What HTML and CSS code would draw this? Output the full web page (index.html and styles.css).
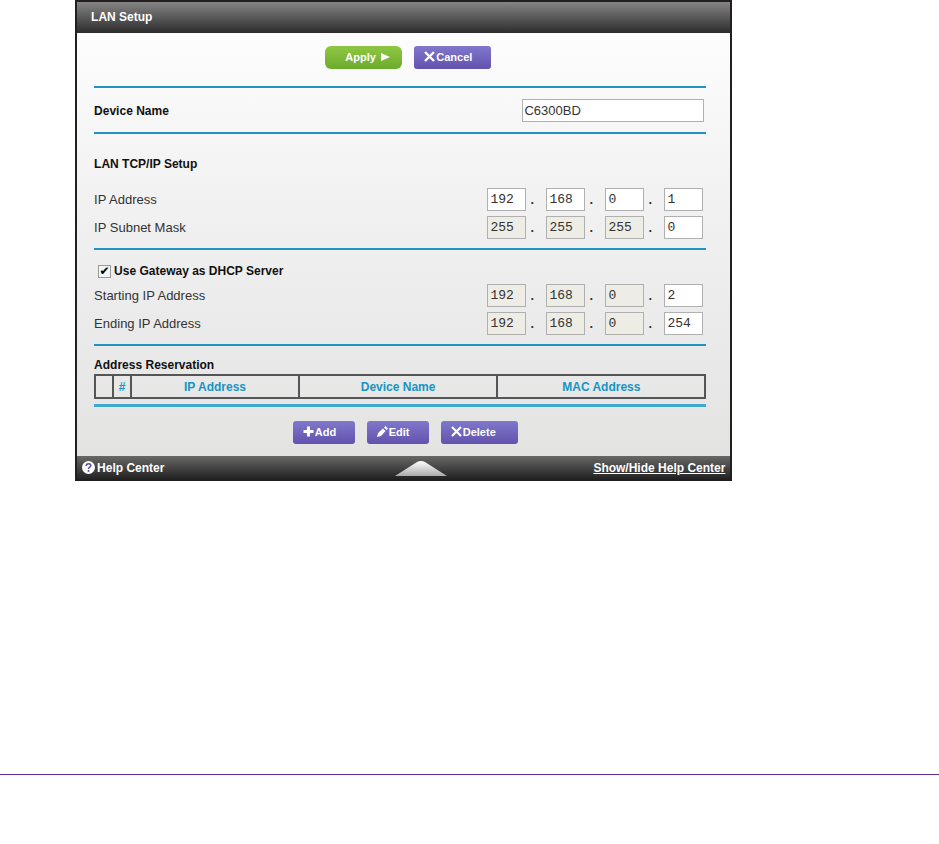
FILE: index.html
```
<!DOCTYPE html>
<html lang="en">
<head>
  <meta charset="UTF-8">
  <title>LAN Setup</title>
  <link rel="stylesheet" href="styles.css">
</head>
<body>
  <form class="panel">
    <h1 class="title">LAN Setup</h1>

    <div class="content">
      <div class="buttons top">
        <button type="submit" class="btn apply">Apply
          <svg width="9" height="8" viewBox="0 0 9 8"><path d="M0 0L9 4L0 8Z" fill="#fff"/></svg>
        </button>
        <button type="button" class="btn cancel">
          <svg width="11" height="11" viewBox="0 0 11 11"><path d="M1 1L10 10M10 1L1 10" stroke="#fff" stroke-width="2.4"/></svg>Cancel
        </button>
      </div>

      <div class="section device">
        <label for="device">Device Name</label>
        <input type="text" id="device" class="name" value="C6300BD">
      </div>

      <div class="section">
        <h2 class="heading">LAN TCP/IP Setup</h2>
        <div class="row">
          <label for="ip1">IP Address</label>
          <div class="ip">
            <input type="text" id="ip1" value="192"><span>.</span>
            <input type="text" aria-label="IP address 2" value="168"><span>.</span>
            <input type="text" aria-label="IP address 3" value="0"><span>.</span>
            <input type="text" aria-label="IP address 4" value="1">
          </div>
        </div>
        <div class="row">
          <label for="mask1">IP Subnet Mask</label>
          <div class="ip">
            <input type="text" id="mask1" value="255" disabled><span>.</span>
            <input type="text" aria-label="Subnet mask 2" value="255" disabled><span>.</span>
            <input type="text" aria-label="Subnet mask 3" value="255" disabled><span>.</span>
            <input type="text" aria-label="Subnet mask 4" value="0">
          </div>
        </div>
      </div>

      <div class="section dhcp">
        <div class="check">
          <input type="checkbox" id="dhcp" checked>
          <label for="dhcp">Use Gateway as DHCP Server</label>
        </div>
        <div class="row">
          <label for="start1">Starting IP Address</label>
          <div class="ip">
            <input type="text" id="start1" value="192" disabled><span>.</span>
            <input type="text" aria-label="Starting address 2" value="168" disabled><span>.</span>
            <input type="text" aria-label="Starting address 3" value="0" disabled><span>.</span>
            <input type="text" aria-label="Starting address 4" value="2">
          </div>
        </div>
        <div class="row">
          <label for="end1">Ending IP Address</label>
          <div class="ip">
            <input type="text" id="end1" value="192" disabled><span>.</span>
            <input type="text" aria-label="Ending address 2" value="168" disabled><span>.</span>
            <input type="text" aria-label="Ending address 3" value="0" disabled><span>.</span>
            <input type="text" aria-label="Ending address 4" value="254">
          </div>
        </div>
      </div>

      <div class="section reservation">
        <table>
          <caption>Address Reservation</caption>
          <thead>
            <tr>
              <th class="pick"></th>
              <th class="num">#</th>
              <th class="addr">IP Address</th>
              <th class="dev">Device Name</th>
              <th>MAC Address</th>
            </tr>
          </thead>
        </table>
      </div>

      <div class="buttons bottom">
        <button type="button" class="btn add">
          <svg width="11" height="11" viewBox="0 0 11 11"><path d="M5.5 0.5V10.5M0.5 5.5H10.5" stroke="#fff" stroke-width="3"/></svg>Add
        </button>
        <button type="button" class="btn edit">
          <svg width="11" height="11" viewBox="0 0 11 11"><path d="M0 11L1 7L6 2.5L8.5 5L4 10ZM7 1.5L8.5 0L11 2.5L9.5 4Z" fill="#fff"/></svg>Edit
        </button>
        <button type="button" class="btn delete">
          <svg width="11" height="11" viewBox="0 0 11 11"><path d="M1 1L10 10M10 1L1 10" stroke="#fff" stroke-width="2.2"/></svg>Delete
        </button>
      </div>
    </div>

    <div class="footer">
      <a class="help" href="#">
        <svg width="13" height="13" viewBox="0 0 13 13"><circle cx="6.5" cy="6.5" r="6.5" fill="#fff"/><path d="M4.2 5C4.2 2 9 2 8.8 4.8C8.7 6.2 6.5 6 6.5 8" fill="none" stroke="#5b4fa5" stroke-width="1.6"/><circle cx="6.5" cy="10" r="1" fill="#5b4fa5"/></svg>Help Center
      </a>
      <svg class="arrow" width="52" height="15" viewBox="0 0 52 15">
        <defs>
          <linearGradient id="up" x1="0" y1="0" x2="0" y2="1">
            <stop offset="0" stop-color="#fff"/>
            <stop offset="1" stop-color="#aaa"/>
          </linearGradient>
        </defs>
        <path d="M0 15L22 1Q26 -1 30 1L52 15Z" fill="url(#up)"/>
      </svg>
      <a class="toggle" href="#">Show/Hide Help Center</a>
    </div>
  </form>

  <hr class="rule">
</body>
</html>
```

FILE: styles.css
```
* {
  box-sizing: border-box;
}

body {
  margin: 0;
  background: #fff;
  color: #111;
  font-family: "Liberation Sans", Arial, sans-serif;
  font-size: 13px;
}

.panel {
  width: 70%;
  min-width: 560px;
  margin-left: 8%;
  border: 2px solid #231f20;
  background: linear-gradient(#fff, #f2f2f3 40%, #e2e2e1);
}

.title {
  margin: 0;
  padding: 0 14px;
  background: linear-gradient(#858585, #2c2c2c);
  color: #fff;
  font-size: 12px;
  line-height: 31px;
}

.content {
  padding: 0 24px 0 17px;
}

.buttons {
  display: flex;
  justify-content: center;
  gap: 12px;
}

.top {
  padding: 13px 0 17px 16px;
}

.bottom {
  padding: 14px 0 12px 10px;
  border-top: 3px solid #3fa9d0;
}

.btn {
  display: flex;
  align-items: center;
  gap: 1px;
  height: 23px;
  padding: 0 0 2px 10px;
  border: 0;
  border-radius: 3px;
  background: linear-gradient(#8078cc, #6252ad);
  color: #fff;
  font-family: inherit;
  font-size: 11px;
  font-weight: bold;
}

.apply {
  width: 77px;
  gap: 5px;
  padding-left: 20px;
  border-radius: 6px;
  background: linear-gradient(#8fc743, #6cab2d);
}

.cancel, .delete {
  width: 77px;
}

.add, .edit {
  width: 62px;
}

.section {
  padding: 0 3px 9px 0;
  border-top: 2px solid #2094bf;
}

.device {
  display: flex;
  justify-content: space-between;
  align-items: center;
  padding: 11px 2px 10px 0;
  font-size: 12px;
  font-weight: bold;
}

input[type="text"] {
  height: 23px;
  padding: 0 2px;
  border: 1px solid #b0b0b0;
  background: #fff;
  color: #333;
}

input.name {
  width: 182px;
  padding: 0 1px;
  font-family: inherit;
  font-size: 13px;
}

.heading {
  margin: 0;
  padding: 20px 0 14px;
  font-size: 12px;
  line-height: 20px;
}

.row {
  display: flex;
  justify-content: space-between;
  align-items: center;
  color: #333;
}

.row + .row {
  margin-top: 5px;
}

.ip {
  display: flex;
}

.ip input[type="text"] {
  width: 39px;
  font-family: "Liberation Mono", monospace;
  font-size: 13px;
}

.ip input:disabled {
  background: #edede6;
}

.ip span {
  width: 20px;
  padding-left: 4px;
  font-weight: bold;
  line-height: 23px;
}

.check {
  display: flex;
  align-items: center;
  gap: 3px;
  padding: 14px 0 5px 4px;
  font-size: 12px;
  font-weight: bold;
  line-height: 15px;
}

.check input {
  appearance: none;
  width: 13px;
  height: 13px;
  margin: 0;
  border: 1px solid #999;
  background: #f4f4f4;
  font-size: 12px;
  line-height: 11px;
  text-align: center;
}

.check input:checked::before {
  content: "✔";
  font-family: "DejaVu Sans", sans-serif;
}

.reservation {
  padding: 11px 0 5px;
}

table {
  width: 100%;
  border-collapse: collapse;
  table-layout: fixed;
}

caption {
  padding-bottom: 1px;
  font-size: 12px;
  font-weight: bold;
  line-height: 16px;
  text-align: left;
}

th {
  height: 23px;
  padding: 0;
  border: 2px solid #555;
  color: #1695c4;
  font-size: 12px;
}

.pick, .num {
  width: 18px;
}

.addr {
  width: 27.5%;
}

.dev {
  width: 32.5%;
}

.footer {
  display: grid;
  grid-template-columns: 1fr auto 1fr;
  align-items: center;
  height: 23px;
  padding: 0 5px;
  background: linear-gradient(#686868, #222);
  font-size: 12px;
  font-weight: bold;
}

.footer a {
  color: #fff;
}

.help {
  display: flex;
  align-items: center;
  gap: 2px;
  text-decoration: none;
}

.arrow {
  align-self: end;
  margin: 0 0 3px 34px;
}

.toggle {
  text-align: right;
}

.rule {
  margin: 293px 0 0;
  border: 0;
  border-top: 1px solid #662d91;
}
```
